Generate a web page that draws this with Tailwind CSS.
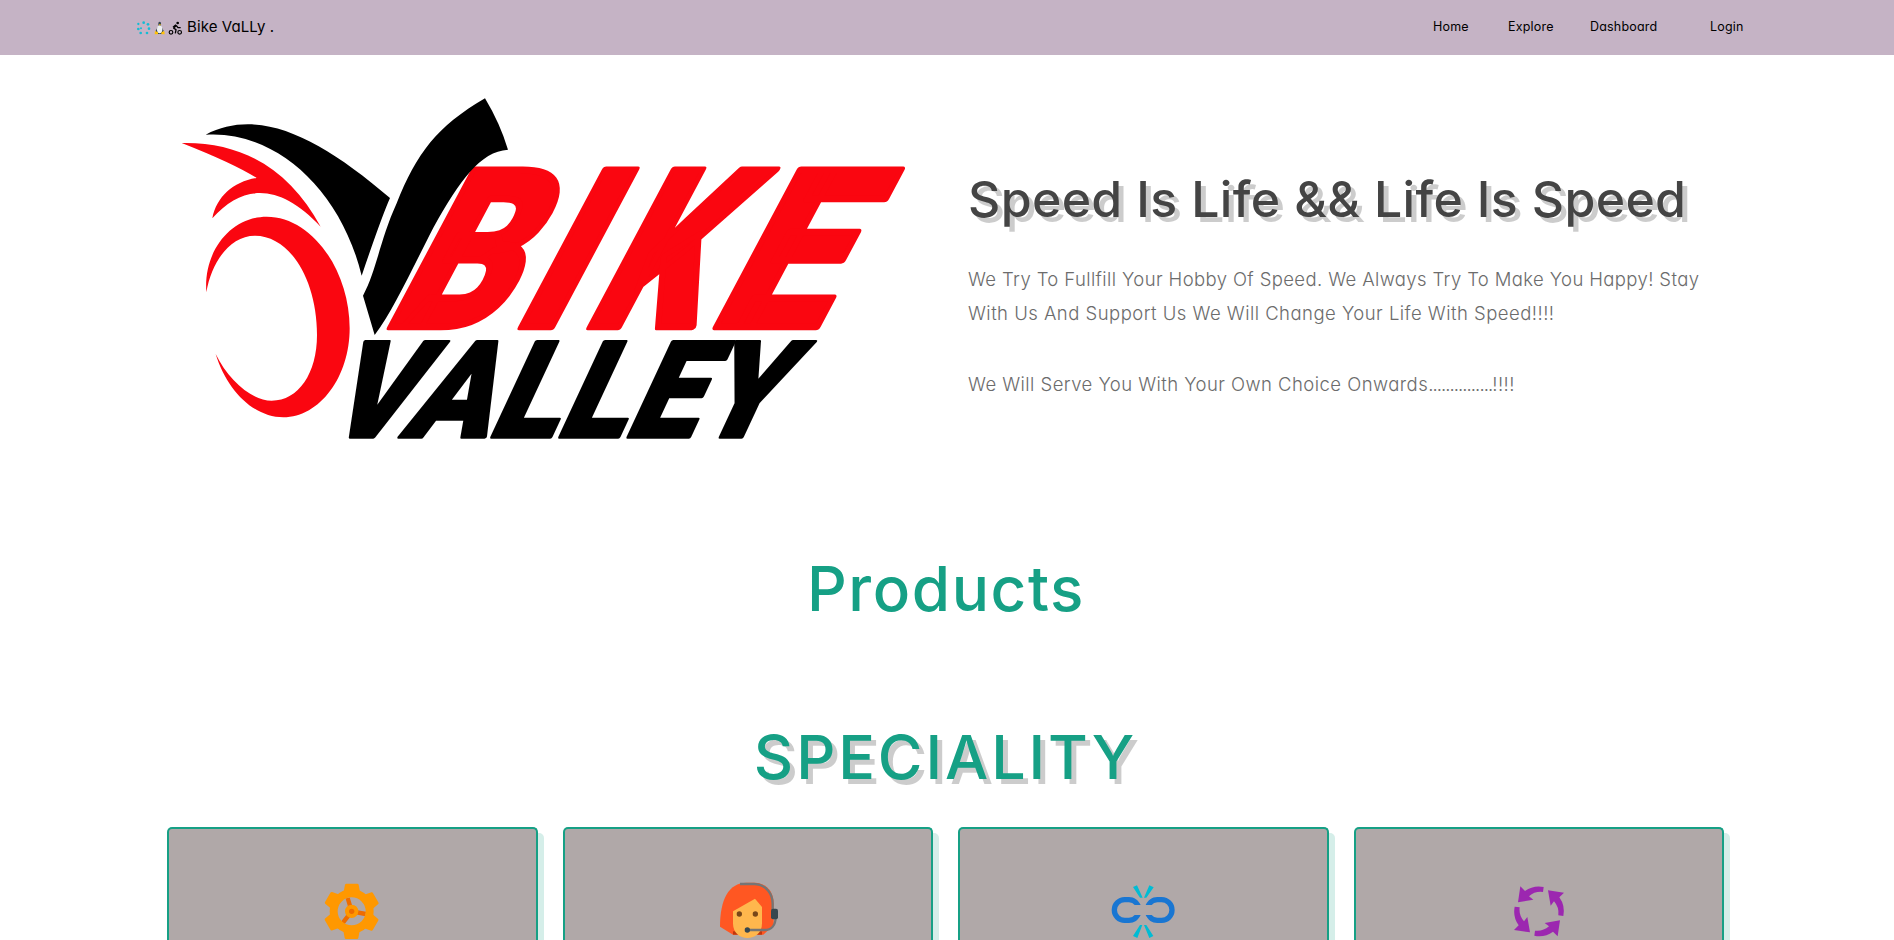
<!DOCTYPE html>
<html lang="en">
<head>
<meta charset="utf-8">
<title>Bike Vally</title>
<script src="https://cdn.jsdelivr.net/npm/@tailwindcss/browser@4"></script>
</head>
<body class="h-[940px] overflow-hidden bg-white font-[Inter,sans-serif] [font-feature-settings:'cv11']">
<header class="flex h-[55px] items-center justify-between bg-[#c5b3c5] pr-[152px] pl-[135px] text-black">
  <a class="flex items-center">
    <svg class="mt-px h-4 w-[48px]" viewBox="45 60 144 48">
      <g fill="#14bcd4"><circle cx="71" cy="68" r="4"/><circle cx="84" cy="73" r="4"/><circle cx="87" cy="86" r="4"/><circle cx="81" cy="99" r="4"/><circle cx="62" cy="99" r="4"/><circle cx="55" cy="87" r="4"/><circle cx="55" cy="72" r="3.5"/><circle cx="63" cy="85" r="3"/></g>
      <path d="M115 68q4-5 8 0v10l8 14-5 10h-14l-5-10 8-14z" fill="#37474f"/>
      <ellipse cx="119" cy="88" rx="8" ry="12" fill="#eceff1"/>
      <path d="M105 93l9 4v6h-10zM133 93l-9 4v6h10zM116 73h7l-3 4z" fill="#ffc107"/>
      <g fill="none" stroke="#000" stroke-width="3.5" stroke-linejoin="round"><circle cx="153" cy="97" r="5.5"/><circle cx="179" cy="97" r="5.5"/><path d="M160 84l8 5-2 11M169 77l5 6h8" stroke-width="4"/><path d="M169 75l-9 8" stroke-width="7"/></g><circle cx="173" cy="69" r="4"/>
    </svg>
    <span class="ml-[4px] text-[15px] tracking-[0.1px] whitespace-nowrap">Bike VaLLy .</span>
  </a>
  <nav class="flex pb-[2px] text-[12.5px] leading-5 tracking-[0.2px]">
    <a class="w-[75px]">Home</a><a class="w-[82px]">Explore</a><a class="w-[120px]">Dashboard</a><a class="w-[32px]">Login</a>
  </nav>
</header>

<main>
  <section class="flex h-[465px] pt-[25px] pl-[160px]">
    <svg class="h-[380px] w-[760px] shrink-0 overflow-visible" viewBox="0 0 2280 1140">
      <g fill="#fa0610">
        <path d="M65 189C250 185 390 270 482 440C360 310 250 310 157 415C170 350 220 305 290 294Q220 250 65 189Z"/>
        <path d="M139 637C130 510 215 410 320 410C455 410 569 570 569 745C569 890 480 1012 370 1012C280 1012 200 930 167 822C205 900 275 962 335 962C415 962 471 880 471 765C471 600 390 467 285 467C210 467 155 545 139 637Z"/>
      </g>
      <path d="M137 164C300 80 480 175 690 354Q665 410 605 587C540 320 340 150 137 164Z"/>
      <g class="font-[Roboto,sans-serif] font-black" stroke-linejoin="round">
        <text transform="translate(0 740) skewX(-28)" font-size="664" fill="#fa0610" stroke="#fa0610" stroke-width="20"><tspan x="660" textLength="358" lengthAdjust="spacingAndGlyphs">B</tspan><tspan x="1046" textLength="168" lengthAdjust="spacingAndGlyphs">I</tspan><tspan x="1260" textLength="335" lengthAdjust="spacingAndGlyphs">K</tspan><tspan x="1634" textLength="348" lengthAdjust="spacingAndGlyphs">E</tspan></text>
        <text transform="translate(482 1071) skewX(-25)" font-size="403" textLength="1350" lengthAdjust="spacingAndGlyphs" stroke="#000" stroke-width="10">VALLEY</text>
      </g>
      <path d="M975 55Q1020 130 1044 209C960 215 900 300 820 443C750 580 700 690 644 765L609 647C650 570 660 480 710 370C770 220 830 140 975 55Z"/>
    </svg>
    <div class="pt-[89px] pl-[48px]">
      <h1 class="text-[50px] leading-[60px] font-medium tracking-[0.35px] whitespace-nowrap text-[#444] [text-shadow:5px_5px_0_rgba(0,0,0,0.2)]">Speed Is Life &amp;&amp; Life Is Speed</h1>
      <div class="mt-[33px] text-[18.5px] leading-[34.2px] font-[350] whitespace-nowrap text-[#6c6c6c]">
        <p class="tracking-[0.38px]">We Try To Fullfill Your Hobby Of Speed. We Always Try To Make You Happy! Stay</p>
        <p class="tracking-[0.47px]">With Us And Support Us We Will Change Your Life With Speed!!!!</p>
        <p class="mt-[37px] tracking-[0.45px]">We Will Serve You With Your Own Choice Onwards<span class="tracking-[-0.95px]">...............</span>!!!!</p>
      </div>
    </div>
  </section>

  <h2 class="pt-[29px] pr-[2px] text-center text-[62px] leading-[80px] font-medium tracking-[1.6px] text-[#16a085]">Products</h2>
  <section class="pt-[88px]">
    <h2 class="pr-[3px] text-center text-[61px] leading-[80px] font-medium tracking-[2.9px] text-[#16a085] [text-shadow:5px_5px_0_rgba(0,0,0,0.2)]">SPECIALITY</h2>
    <div class="mt-[30px] mr-[170px] ml-[167px] grid grid-cols-4 gap-[25px]">
      <article class="flex h-[113px] justify-center rounded-t-[5px] border-2 border-b-0 border-[#16a085] bg-[#b0a8a8] pt-[47px] shadow-[6px_6px_0_rgba(22,160,133,0.18)]">
        <svg class="size-[70px] shrink-0" viewBox="502 198 210 210">
          <g stroke="#ef6c00" stroke-width="13"><path d="M606 304L594 264M606 304L648 312M606 304L580 338"/></g>
          <circle cx="606" cy="304" r="54" fill="none" stroke="#ff9800" stroke-width="24"/>
          <g fill="#ff9800"><path id="tooth" d="M582 246L586 224Q587 221 590 221H623Q626 221 627 224L631 246Z"/><use href="#tooth" transform="rotate(60 606 304)"/><use href="#tooth" transform="rotate(120 606 304)"/><use href="#tooth" transform="rotate(180 606 304)"/><use href="#tooth" transform="rotate(240 606 304)"/><use href="#tooth" transform="rotate(300 606 304)"/><circle cx="606" cy="304" r="20"/></g>
          <circle cx="606" cy="304" r="8" fill="#ef6c00"/>
        </svg>
      </article>
      <article class="flex h-[113px] justify-center rounded-t-[5px] border-2 border-b-0 border-[#16a085] bg-[#b0a8a8] pt-[47px] shadow-[6px_6px_0_rgba(22,160,133,0.18)]">
        <svg class="size-[70px] shrink-0" viewBox="99 48 210 210">
          <path d="M120 200C120 120 145 68 200 68H225C260 70 281 95 281 130V195L250 224H159Z" fill="#ff5722"/>
          <path d="M159 214h87v10h-87z" fill="#bf360c"/>
          <path d="M159 154L225 116L246 141V190C246 220 225 234 202 234C180 234 159 220 159 190Z" fill="#ffb74d"/>
          <g fill="#784719"><circle cx="178" cy="162" r="8"/><circle cx="226" cy="162" r="8"/></g>
          <path d="M180 72H222C258 72 278 102 278 132V150M287 170C287 195 275 210 253 210H202" fill="none" stroke="#757575" stroke-width="7"/>
          <rect x="273" y="146" width="21" height="32" rx="6" fill="#37474f"/><circle cx="202" cy="210" r="8" fill="#37474f"/>
        </svg>
      </article>
      <article class="flex h-[113px] justify-center rounded-t-[5px] border-2 border-b-0 border-[#16a085] bg-[#b0a8a8] pt-[47px] shadow-[6px_6px_0_rgba(22,160,133,0.18)]">
        <svg class="size-[70px] shrink-0" viewBox="85 48 210 210">
          <path d="M183 135C176 120 164 111 148 111H135A39 39 0 0 0 135 189H148C164 189 176 180 183 165H165Q159 173 148 173H135A23 23 0 0 1 135 127H148Q159 127 165 135ZM198 135C205 120 217 111 233 111H246A39 39 0 0 1 246 189H233C217 189 205 180 198 165H216Q222 173 233 173H246A23 23 0 0 0 246 127H233Q222 127 216 135Z" fill="#1976d2"/>
          <path d="M160 81L172 76L189 113H181ZM209 76L222 82L200 113H193ZM181 195H188L173 234L160 228ZM193 195H200L221 228L209 234Z" fill="#00bcd4"/>
        </svg>
      </article>
      <article class="flex h-[113px] justify-center rounded-t-[5px] border-2 border-b-0 border-[#16a085] bg-[#b0a8a8] pt-[47px] shadow-[6px_6px_0_rgba(22,160,133,0.18)]">
        <svg class="size-[70px] shrink-0" viewBox="72 198 210 210" fill="#9c27b0">
          <path id="arrow" d="M191 231L189 246Q165 243 147 259L160 269L114 277L121 229L135 243Q160 225 191 231Z"/>
          <use href="#arrow" transform="rotate(90 177 304)"/><use href="#arrow" transform="rotate(180 177 304)"/><use href="#arrow" transform="rotate(270 177 304)"/>
        </svg>
      </article>
    </div>
  </section>
</main>
</body>
</html>
